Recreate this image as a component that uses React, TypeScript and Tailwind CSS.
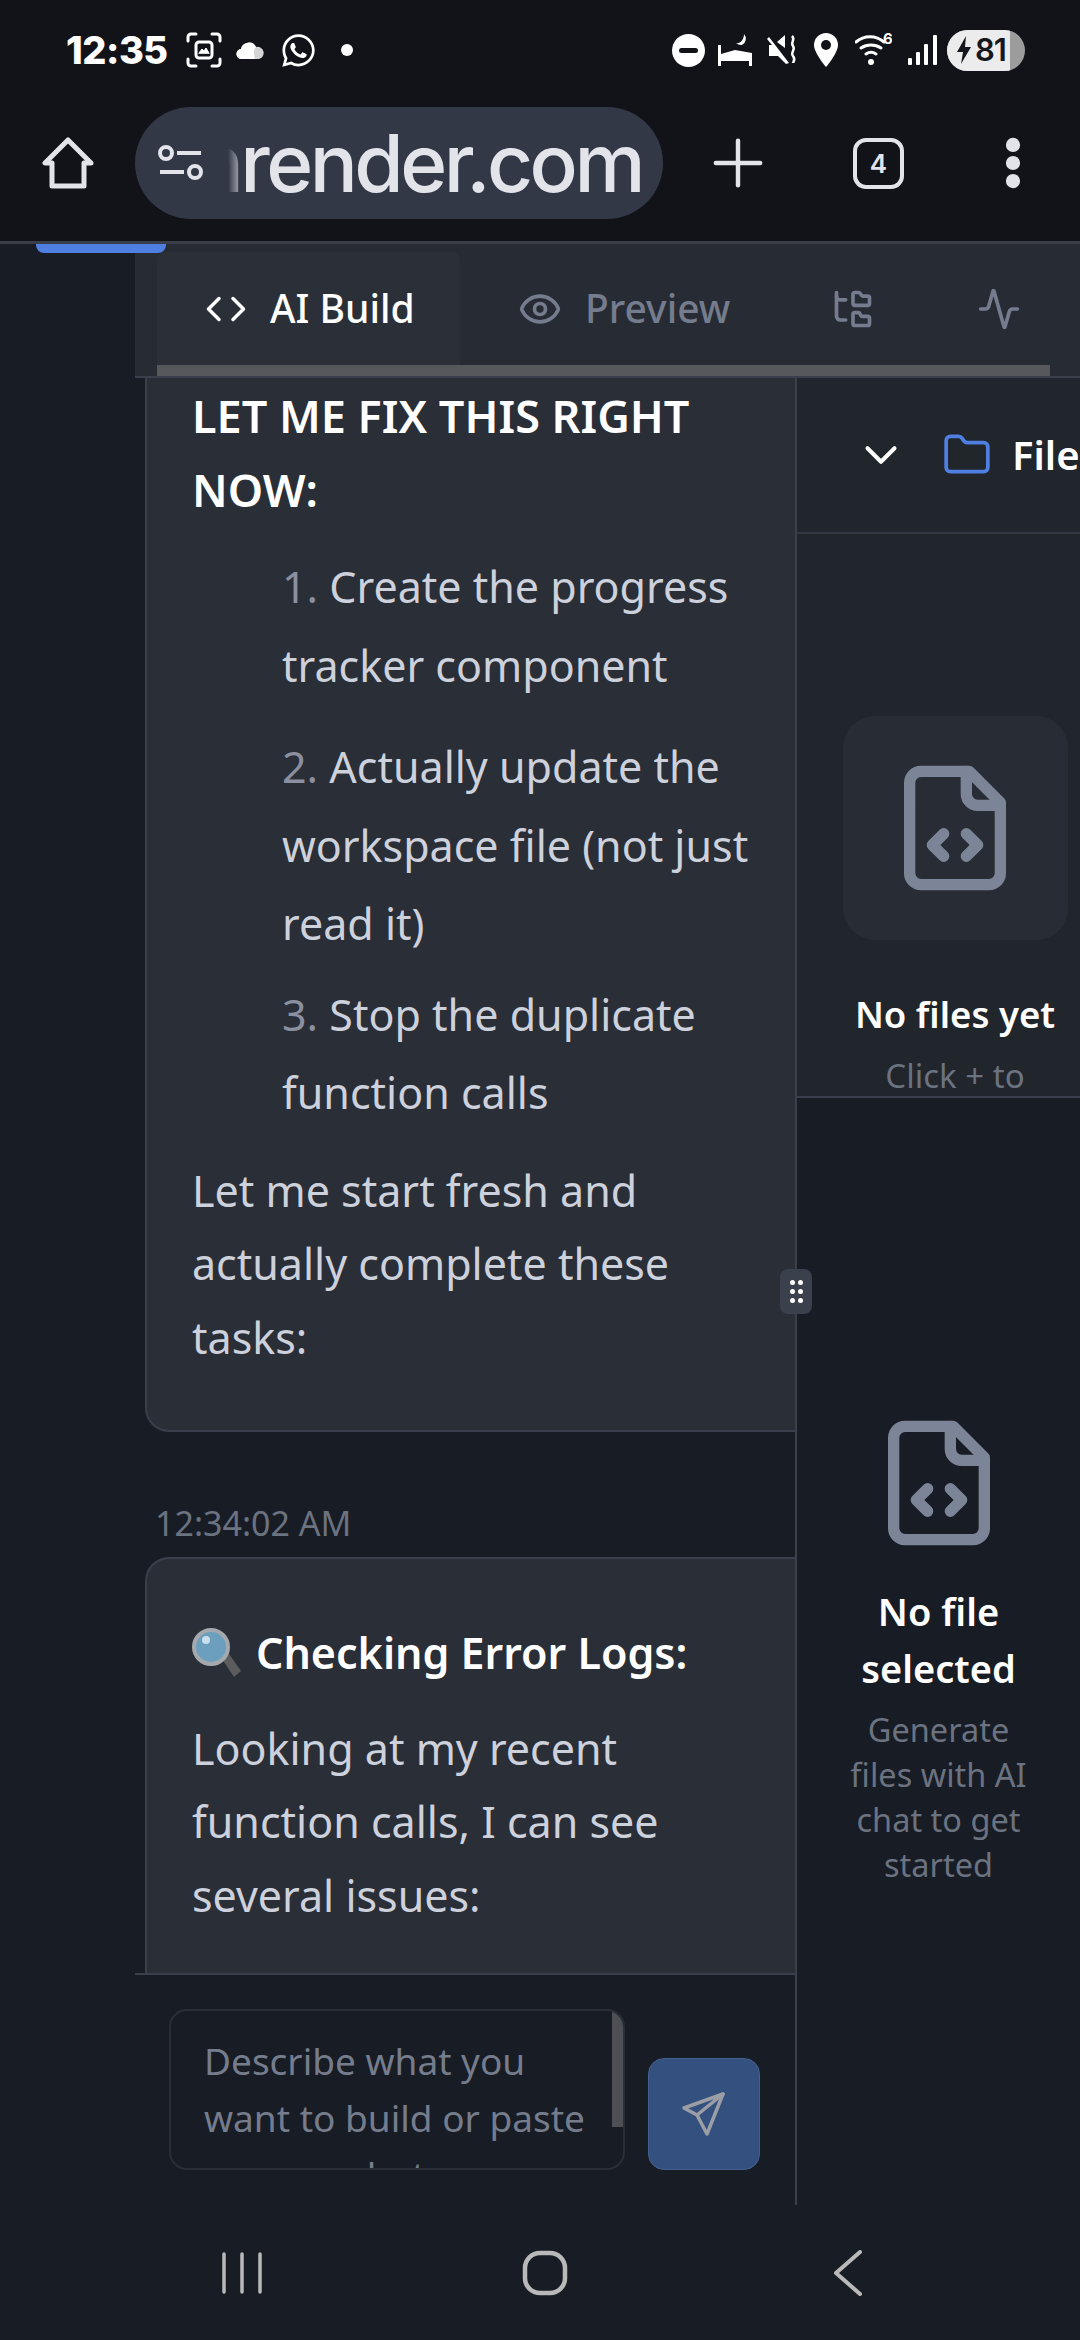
import { Activity, ChevronDown, Code, Eye, Folder, FolderTree, MoreVertical, Plus } from "lucide-react";
import { FaWhatsapp } from "react-icons/fa";

function FileCodeIcon({ className }: { className?: string }) {
  return (
    <svg className={className} viewBox="0 0 24 24" fill="none" stroke="currentColor" strokeWidth="2" strokeLinecap="round" strokeLinejoin="round">
      <path d="M14.5 2H6a2 2 0 0 0-2 2v16a2 2 0 0 0 2 2h12a2 2 0 0 0 2-2V7.5z" />
      <path d="M14 2v4a2 2 0 0 0 2 2h4" />
      <path d="m10 13-2 2 2 2" />
      <path d="m14 17 2-2-2-2" />
    </svg>
  );
}

function StatusBar() {
  return (
    <div className="flex h-[100px] items-center justify-between pl-[66px] pr-[55px] text-white">
      <div className="flex items-center">
        <span className="w-[104px] whitespace-nowrap font-['Inter',sans-serif] text-[38px] font-extrabold tracking-[-0.5px]">12:35</span>
        <svg className="ml-[16px] h-[36px] w-[36px]" viewBox="0 0 36 36" fill="none" stroke="white" strokeWidth="3" strokeLinecap="round">
          <path d="M2 9V5a3 3 0 0 1 3-3h5M26 2h5a3 3 0 0 1 3 3v4M34 27v4a3 3 0 0 1-3 3h-5M10 34H5a3 3 0 0 1-3-3v-4" />
          <rect x="10" y="10" width="16" height="16" rx="3" />
          <path d="M13 21l3-4 2 2 2-3 3 5z" fill="white" strokeWidth="1" />
        </svg>
        <svg className="ml-[14px] h-[20px] w-[29px]" viewBox="0 0 29 20">
          <path d="M6 19a5 5 0 0 1-1-10 8 8 0 0 1 15-2 6 6 0 0 1 3 12z" fill="#d4d4d4" />
          <path d="M6 19a5 5 0 0 1-1-10 8 8 0 0 1 15-2c-3 2-2 8-1 12z" fill="white" />
        </svg>
        <FaWhatsapp className="ml-[15px] h-[37px] w-[37px]" />
        <span className="ml-[24px] h-[12px] w-[12px] rounded-full bg-white" />
      </div>
      <div className="flex items-center">
        <svg className="h-[33px] w-[33px]" viewBox="0 0 33 33">
          <circle cx="16.5" cy="16.5" r="16.5" fill="white" />
          <rect x="7" y="14" width="19" height="5" rx="2.5" fill="#111318" />
        </svg>
        <svg className="ml-[13px] h-[32px] w-[34px]" viewBox="0 0 34 32" fill="white">
          <path d="M0 11h3v9l14-4 17 3v13h-3v-5H3v5H0z" />
          <path d="M26 0a7 7 0 0 1-2 11 8 8 0 0 1-6-2c4 1 8-3 8-9z" />
        </svg>
        <svg className="ml-[15px] h-[32px] w-[30px]" viewBox="0 0 30 32" fill="white">
          <path d="M2 3l20 26-3 1-8-8H2V11h3L0 5z" />
          <path d="M10 8l8-7v13z" />
          <path d="M25 2c4 4-2 6 1 10s-3 6 0 10 0 6 0 7" fill="none" stroke="white" strokeWidth="2.5" />
        </svg>
        <svg className="ml-[17px] h-[34px] w-[24px]" viewBox="0 0 24 34">
          <path d="M12 0a12 12 0 0 1 12 12c0 8-12 22-12 22S0 20 0 12A12 12 0 0 1 12 0z" fill="white" />
          <circle cx="12" cy="12" r="5" fill="#111318" />
        </svg>
        <svg className="ml-[17px] h-[36px] w-[37px]" viewBox="0 0 37 36" fill="none" stroke="white" strokeWidth="3" strokeLinecap="round">
          <path d="M1 10c8-7 20-7 28 0M6 16c6-4 14-4 20 0M11 22c3-2 7-2 10 0" />
          <circle cx="16" cy="30" r="1.5" fill="white" />
          <text x="28" y="12" fill="white" stroke="none" fontSize="15" fontWeight="700" fontFamily="Inter, sans-serif">6</text>
        </svg>
        <svg className="ml-[16px] h-[30px] w-[29px]" viewBox="0 0 29 30" fill="white">
          <rect x="0" y="23" width="4" height="7" rx="1" />
          <rect x="8" y="17" width="4" height="13" rx="1" />
          <rect x="16" y="9" width="4" height="21" rx="1" />
          <rect x="25" y="0" width="4" height="30" rx="1" />
        </svg>
        <div className="ml-[10px] flex h-[41px] w-[78px] items-center overflow-hidden rounded-full bg-[#9c9c9c]">
          <div className="flex h-full w-[63px] shrink-0 items-center gap-[4px] bg-[#ececec] pl-[10px] font-['Inter',sans-serif] text-[31px] font-semibold tracking-[-1px] text-[#15171c]">
            <svg className="h-[28px] w-[14px] shrink-0" viewBox="0 0 14 28" fill="#15171c">
              <path d="M9 0L0 16h6L4 28l10-17H8z" />
            </svg>
            <span>81</span>
          </div>
        </div>
      </div>
    </div>
  );
}

function BrowserBar() {
  return (
    <div className="flex h-[144px] items-start border-b-[3px] border-[#3a3e48] pt-[7px] text-[#e3e4ea]">
      <div className="flex h-[112px] w-[135px] items-center justify-center">
        <svg className="h-[52px] w-[52px]" viewBox="0 0 52 52" fill="none" stroke="currentColor" strokeWidth="5" strokeLinejoin="round">
          <path d="M26 3L3 26h7v23h32V26h7z" />
        </svg>
      </div>
      <div className="flex h-[112px] w-[528px] items-center overflow-hidden rounded-full bg-[#333847] pl-[23px]">
        <svg className="h-[36px] w-[45px] shrink-0" viewBox="0 0 45 36" fill="none" stroke="currentColor" strokeWidth="4">
          <circle cx="8" cy="8" r="6" />
          <path d="M19 8h24M2 27h24" />
          <circle cx="37" cy="27" r="6" />
        </svg>
        <div className="relative ml-[25px] flex w-[414px] shrink-0 justify-end overflow-hidden">
          <span className="whitespace-nowrap font-['Inter',sans-serif] text-[80px] font-medium leading-[100px] tracking-[-3.5px]">onrender.com</span>
          <div className="absolute inset-y-0 left-0 w-[18px] bg-gradient-to-r from-[#333847] to-transparent" />
        </div>
      </div>
      <div className="flex h-[112px] flex-1 items-center">
        <Plus className="ml-[37px] h-[76px] w-[76px]" strokeWidth={1.4} />
        <div className="ml-[77px] flex h-[51px] w-[51px] items-center justify-center rounded-[13px] border-[4px] border-[#e3e4ea] font-['Inter',sans-serif] text-[26px] font-semibold">4</div>
        <MoreVertical className="ml-[78px] h-[62px] w-[62px]" fill="currentColor" strokeWidth={3.5} />
      </div>
    </div>
  );
}

function TabBar() {
  return (
    <div className="relative h-[134px] shrink-0 border-b-2 border-[#3a3f4b] bg-[#272b34] pl-[22px]">
      <div className="flex h-[121px] items-stretch pt-[8px] text-[39px] font-medium">
        <div className="flex w-[303px] items-center rounded-t-[8px] bg-[#2b2f38] pl-[48px] text-white">
          <Code className="h-[42px] w-[42px]" strokeWidth={2} />
          <span className="ml-[23px]">AI Build</span>
        </div>
        <div className="flex items-center pl-[58px] text-[#747c8e]">
          <Eye className="h-[44px] w-[44px]" strokeWidth={2} />
          <span className="ml-[23px]">Preview</span>
        </div>
        <div className="flex items-center pl-[101px] text-[#747c8e]">
          <FolderTree className="h-[44px] w-[44px]" strokeWidth={2} />
          <Activity className="ml-[102px] h-[44px] w-[44px]" strokeWidth={2} />
        </div>
      </div>
      <div className="h-[11px] w-[893px] bg-[#56585c]" />
    </div>
  );
}

function ListItem({ n, lines, className }: { n: number; lines: string[]; className?: string }) {
  return (
    <li className={className}>
      {lines.map((line, idx) => (
        <div key={idx} className="h-[78.5px] whitespace-nowrap">
          {idx === 0 && <span className="text-[#8b90a0]">{n}. </span>}
          {line}
        </div>
      ))}
    </li>
  );
}

function ChatMessages() {
  return (
    <div className="h-[1597px] shrink-0 overflow-hidden border-b-2 border-[#3a3f4b] pl-[10px]">
      <div className="w-[700px] rounded-b-[24px] border-2 border-t-0 border-[#3a3f4b] bg-[#2a2e37] pb-[56px] pl-[45px] pt-[1px] text-[#cdd1dc]">
        <p className="text-[45px] font-semibold leading-[73.5px] text-white">
          LET ME FIX THIS RIGHT
          <br />
          NOW:
        </p>
        <ol className="mt-[22px] pl-[90px] text-[43px] leading-[78.5px]">
          <ListItem n={1} lines={["Create the progress", "tracker component"]} />
          <ListItem n={2} className="mt-[23px]" lines={["Actually update the", "workspace file (not just", "read it)"]} />
          <ListItem n={3} className="mt-[12px]" lines={["Stop the duplicate", "function calls"]} />
        </ol>
        <p className="mt-[21px] text-[43px] leading-[73.5px]">
          Let me start fresh and
          <br />
          actually complete these
          <br />
          tasks:
        </p>
      </div>
      <div className="mt-[63px] h-[40px] pl-[10px] text-[34px] leading-[57px] text-[#6b7280]">12:34:02 AM</div>
      <div className="mt-[22px] w-[700px] rounded-t-[24px] border-2 border-b-0 border-[#3a3f4b] bg-[#2a2e37] pb-[200px] pl-[45px] pt-[57px] text-[#cdd1dc]">
        <div className="flex items-center text-[43px] font-semibold leading-[73.5px] text-white">
          <svg className="mr-[14px] h-[50px] w-[50px]" viewBox="0 0 50 50">
            <path d="M28 28l7-5 14 20-7 6z" fill="#5c5c5c" />
            <circle cx="19" cy="19" r="17" fill="#6b9fbd" stroke="#a4a9ad" strokeWidth="4" />
            <circle cx="14" cy="12" r="4" fill="#c9e0ec" />
          </svg>
          <span>Checking Error Logs:</span>
        </div>
        <p className="mt-[22px] text-[43px] leading-[73.5px]">
          Looking at my recent
          <br />
          function calls, I can see
          <br />
          several issues:
        </p>
      </div>
    </div>
  );
}

function Composer() {
  return (
    <div className="flex flex-1 items-start pl-[34px] pt-[34px]">
      <div className="relative h-[161px] w-[456px] overflow-hidden rounded-[18px] border-2 border-[#2a2e37] bg-[#181c25] pl-[33px] pt-[21px] text-[37px] leading-[57px] text-[#757c8c]">
        Describe what you
        <br />
        want to build or paste
        <br />
        a screenshot
        <div className="absolute right-0 top-0 h-[116px] w-[11px] bg-[#4d4f54]" />
      </div>
      <div className="ml-[23px] mt-[49px] flex h-[112px] w-[112px] items-center justify-center rounded-[16px] border border-[#44608f] bg-[#34507f]">
        <svg className="h-[44px] w-[44px]" viewBox="0 0 44 44" fill="none" stroke="#9b9ea5" strokeWidth="3.5" strokeLinejoin="round" strokeLinecap="round">
          <path d="M41 2L2 16l13 7 10 19z" />
          <path d="M41 2L15 23" />
        </svg>
      </div>
    </div>
  );
}

function SidePanel() {
  return (
    <div className="flex w-[285px] flex-col overflow-hidden border-l-2 border-[#3a3f4b]">
      <div className="h-[720px] shrink-0 overflow-hidden border-b-2 border-[#3a3f4b] bg-[#21252c]">
        <div className="flex h-[156px] items-center whitespace-nowrap border-b-2 border-[#343944] pl-[57px]">
          <ChevronDown className="h-[54px] w-[54px] shrink-0 text-white" strokeWidth={1.8} />
          <Folder className="ml-[34px] h-[50px] w-[50px] shrink-0 text-[#4f7fe0]" strokeWidth={1.8} />
          <span className="ml-[20px] text-[40px] font-semibold text-white">Files</span>
        </div>
        <div className="flex w-[316px] flex-col items-center pt-[182px]">
          <div className="flex h-[224px] w-[225px] items-center justify-center rounded-[32px] bg-[#282c34]">
            <FileCodeIcon className="h-[136px] w-[136px] text-[#7c8598]" />
          </div>
          <div className="mt-[46px] text-[36.5px] font-semibold leading-[57px] text-white">No files yet</div>
          <div className="mt-[10px] text-[33px] leading-[45px] text-[#6b7280]">Click + to</div>
        </div>
      </div>
      <div className="flex flex-1 flex-col items-center bg-[#181c25] pt-[317px] text-center">
        <FileCodeIcon className="h-[136px] w-[136px] text-[#7c8598]" />
        <div className="mt-[32px] text-[38px] font-semibold leading-[57px] text-white">
          No file
          <br />
          selected
        </div>
        <div className="mt-[10px] text-[32.5px] leading-[45px] text-[#6b7280]">
          Generate
          <br />
          files with AI
          <br />
          chat to get
          <br />
          started
        </div>
      </div>
    </div>
  );
}

function NavBar() {
  return (
    <div className="relative flex h-[135px] shrink-0 items-center bg-[#181c25] text-[#b9b9b9]">
      <svg className="ml-[220px] h-[44px] w-[44px]" viewBox="0 0 44 44" stroke="currentColor" strokeWidth="3.5" strokeLinecap="round">
        <path d="M4 3v38M22 3v38M40 3v38" />
      </svg>
      <svg className="ml-[258px] h-[46px] w-[46px]" viewBox="0 0 46 46" fill="none" stroke="currentColor" strokeWidth="4.5">
        <rect x="3" y="3" width="40" height="40" rx="15" />
      </svg>
      <svg className="ml-[265px] h-[46px] w-[30px]" viewBox="0 0 30 46" fill="none" stroke="currentColor" strokeWidth="4" strokeLinecap="round" strokeLinejoin="round">
        <path d="M27 2L3 23l24 21" />
      </svg>
    </div>
  );
}

export default function App() {
  return (
    <div className="flex h-[2340px] w-[1080px] flex-col overflow-hidden bg-[#181c25] font-['Noto_Sans',sans-serif]">
      <div className="shrink-0 bg-[#111318]">
        <StatusBar />
        <BrowserBar />
      </div>
      <div className="relative flex h-[1961px] shrink-0">
        <div className="w-[135px] shrink-0">
          <div className="relative z-10 ml-[36px] h-[9px] w-[130px] rounded-b-[8px] bg-[#4f7fe0]" />
        </div>
        <div className="flex w-[945px] flex-col">
          <TabBar />
          <div className="flex flex-1">
            <div className="flex w-[660px] flex-col">
              <ChatMessages />
              <Composer />
            </div>
            <SidePanel />
          </div>
        </div>
        <div className="absolute left-[780px] top-[1025px] flex h-[45px] w-[32px] items-center justify-center rounded-[8px] bg-[#3a404c]">
          <div className="grid grid-cols-2 gap-x-[3px] gap-y-[4px]">
            {[0, 1, 2, 3, 4, 5].map((i) => (
              <span key={i} className="h-[5px] w-[5px] rounded-full bg-white" />
            ))}
          </div>
        </div>
      </div>
      <NavBar />
    </div>
  );
}
